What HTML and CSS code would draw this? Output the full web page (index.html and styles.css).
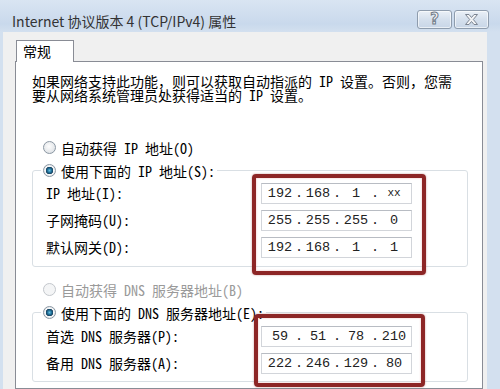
FILE: index.html
```html
<!DOCTYPE html>
<html lang="zh-CN">
<head>
  <meta charset="UTF-8" />
  <title>Internet 协议版本 4 (TCP/IPv4) 属性</title>
  <link rel="stylesheet" href="styles.css">
</head>
<body>
  <div class="window">
    <!-- TITLE BAR -->
    <div class="titlebar">
      <span class="title">Internet 协议版本 4 (TCP/IPv4) 属性</span>
      <div class="caption-buttons">
        <button class="cap-btn help">?</button>
        <button class="cap-btn close">
          <svg width="17" height="13" viewBox="0 0 17 13">
            <path d="M2.5 1.5h3.5l2.5 3 2.5-3h3.5l-4.2 5 4.2 5h-3.5l-2.5-3-2.5 3h-3.5l4.2-5z" fill="#f3f4f6" stroke="#7c8592" stroke-width="1" stroke-linejoin="round"/>
          </svg>
        </button>
      </div>
    </div>

    <!-- DIALOG BODY -->
    <div class="client">
      <div class="tabs">
        <div class="tab active">常规</div>
      </div>

      <div class="panel">
        <p class="intro">如果网络支持此功能，则可以获取自动指派的 IP 设置。否则，您需要从网络系统管理员处获得适当的 IP 设置。</p>

        <label class="option"><input type="radio" name="ip">自动获得 IP 地址(O)</label>
        <fieldset class="group">
          <legend><label class="option"><input type="radio" name="ip" checked>使用下面的 IP 地址(S):</label></legend>
          <div class="group-body">
            <div class="labels">
              <span>IP 地址(I):</span>
              <span>子网掩码(U):</span>
              <span>默认网关(D):</span>
            </div>
            <div class="fields mark-ip">
              <div class="ip"><span class="oct">192</span><span class="dot">.</span><span class="oct">168</span><span class="dot">.</span><span class="oct">1</span><span class="dot">.</span><span class="oct small">xx</span></div>
              <div class="ip"><span class="oct">255</span><span class="dot">.</span><span class="oct">255</span><span class="dot">.</span><span class="oct">255</span><span class="dot">.</span><span class="oct">0</span></div>
              <div class="ip"><span class="oct">192</span><span class="dot">.</span><span class="oct">168</span><span class="dot">.</span><span class="oct">1</span><span class="dot">.</span><span class="oct">1</span></div>
            </div>
          </div>
        </fieldset>

        <label class="option disabled"><input type="radio" name="dns" disabled>自动获得 DNS 服务器地址(B)</label>
        <fieldset class="group dns">
          <legend><label class="option"><input type="radio" name="dns" checked>使用下面的 DNS 服务器地址(E):</label></legend>
          <div class="group-body">
            <div class="labels">
              <span>首选 DNS 服务器(P):</span>
              <span>备用 DNS 服务器(A):</span>
            </div>
            <div class="fields mark-dns">
              <div class="ip"><span class="oct">59</span><span class="dot">.</span><span class="oct">51</span><span class="dot">.</span><span class="oct">78</span><span class="dot">.</span><span class="oct">210</span></div>
              <div class="ip"><span class="oct">222</span><span class="dot">.</span><span class="oct">246</span><span class="dot">.</span><span class="oct">129</span><span class="dot">.</span><span class="oct">80</span></div>
            </div>
          </div>
        </fieldset>
      </div>
    </div>
  </div>
</body>
</html>
```

FILE: styles.css
```css
body {
  margin: 0;
  width: 500px;
  height: 389px;
  overflow: hidden;
  font-family: "Noto Sans Mono CJK SC", "Liberation Mono", "Noto Sans CJK SC", monospace;
  font-size: 14px;
  color: #000;
}
.window {
  height: 389px;
  display: flex;
  flex-direction: column;
  background-color: #d3e0ef;
}

/* Title bar */
.titlebar {
  height: 32px;
  box-sizing: border-box;
  display: flex;
  align-items: flex-start;
  padding: 10px 11px 0 12px;
  background: linear-gradient(#d9e5f2, #c9d9ec 75%, #d3e0ef);
}
.titlebar .title {
  font-family: "Noto Sans CJK SC", sans-serif;
  font-size: 14px;
  line-height: 19px;
  padding-top: 2px;
  color: #333;
}
.caption-buttons {
  margin-left: auto;
  display: flex;
  gap: 2px;
}
.cap-btn {
  width: 35px;
  height: 19px;
  padding: 0;
  border: 1px solid #8e9cad;
  border-radius: 3px;
  background: linear-gradient(#eaf0f7, #d5e0ed 50%, #c8d6e7);
  box-shadow: inset 0 0 0 1px rgba(255, 255, 255, 0.6);
  display: flex;
  align-items: center;
  justify-content: center;
}
.cap-btn.help {
  font-family: "DejaVu Sans", sans-serif;
  font-size: 15px;
  font-weight: 700;
  line-height: 17px;
  color: #f2f4f6;
  -webkit-text-stroke: 1px #717b88;
}

/* Client area */
.client {
  flex: 1;
  min-height: 0;
  display: flex;
  flex-direction: column;
  margin: 0 13px 0 3px;
  padding: 8px 4px 0 12px;
  background-color: #f0f0f0;
}
.tabs {
  display: flex;
}
.tab {
  position: relative;
  width: 58px;
  height: 22px;
  box-sizing: border-box;
  margin: 0 0 -1px 1px;
  padding-left: 6px;
  border: 1px solid #898c95;
  border-bottom: none;
  background-color: #fff;
  line-height: 21px;
  font-family: "Noto Sans CJK SC", sans-serif;
}
.panel {
  flex: 1;
  background-color: #fff;
  border: 1px solid #898c95;
  padding: 12px 14px 0 16px;
}
.intro {
  margin: 0;
  max-width: 425px;
  line-height: 14px;
}

/* Radio options */
.option {
  display: flex;
  align-items: center;
  gap: 5px;
  height: 23px;
  white-space: nowrap;
}
.panel > .option {
  margin-left: 11px;
}
.intro + .option {
  margin-top: 34px;
}
.option input {
  appearance: none;
  width: 13px;
  height: 13px;
  margin: 0;
  box-sizing: border-box;
  border: 1px solid #8b97a3;
  border-radius: 50%;
  background: radial-gradient(circle at 45% 40%, #fdfdfd, #e4e7ea 65%, #d0d4d9);
}
.option input:checked {
  background: radial-gradient(circle, #6cc0df 0, #21739c 2px, #173f5c 3.5px, #f6f7f8 4px, #e0e3e7 6.5px);
}
.option.disabled {
  color: #9a9a9a;
  margin-top: 11px;
}
.option.disabled input {
  border-color: #c3c7cc;
  background: #f4f5f6;
}

/* Group boxes */
.group {
  margin: 0;
  padding: 0 55px 8px 8px;
  border: 1px solid #d9dfe4;
  border-radius: 3px;
}
.group.dns {
  padding-bottom: 7px;
}
.group legend {
  padding: 0 2px;
}
.group-body {
  display: flex;
  padding: 1px 0 0 5px;
}
.group.dns .group-body {
  padding-top: 2px;
}
.labels {
  flex: 1;
  display: flex;
  flex-direction: column;
  gap: 6px;
}
.labels span {
  height: 21px;
  line-height: 21px;
}
.fields {
  position: relative;
  width: 151px;
  display: flex;
  flex-direction: column;
  gap: 6px;
}

/* IP address boxes */
.ip {
  height: 21px;
  box-sizing: border-box;
  display: flex;
  padding-left: 1px;
  border: 1px solid #d2d5da;
  border-top-color: #b8bcc3;
  background-color: #fff;
  font-family: "Liberation Mono", monospace;
  font-size: 13.5px;
  line-height: 19px;
  color: #222;
}
.ip .oct {
  width: 34px;
  text-align: center;
}
.ip .oct.small {
  font-size: 11px;
}
.ip .dot {
  width: 4px;
  display: flex;
  justify-content: center;
}

/* Red highlight marks drawn over the screenshot */
.fields::after {
  content: '';
  position: absolute;
  border: 4px solid #8d2626;
  border-radius: 4px;
  box-shadow: 0 0 2px rgba(141, 38, 38, 0.5), inset 0 0 2px rgba(220, 120, 120, 0.6);
}
.mark-ip::after {
  top: -9px;
  left: -9px;
  right: -14px;
  bottom: -17px;
}
.mark-dns::after {
  top: -12px;
  left: -7px;
  right: -13px;
  bottom: -13px;
}
```
